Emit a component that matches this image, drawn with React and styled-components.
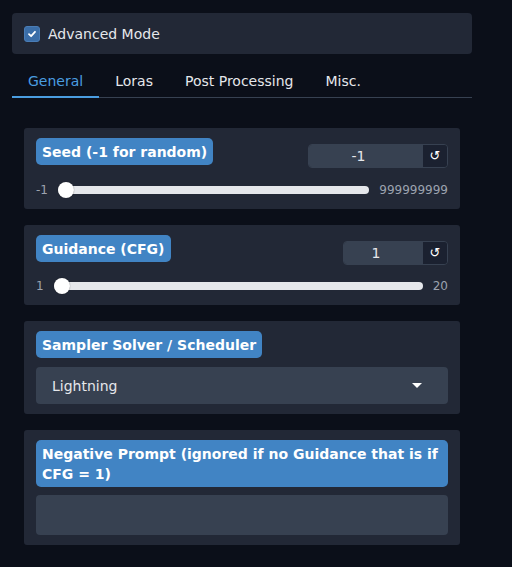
import React from "react";
import styled, { createGlobalStyle } from "styled-components";

const Global = createGlobalStyle`
  html, body { margin: 0; padding: 0; background: #0b0f19; }
  body { font-family: "DejaVu Sans", Verdana, sans-serif; color: #e5e7eb; }
  * { box-sizing: border-box; }
`;

const Page = styled.div`
  width: 512px;
  min-height: 567px;
  padding: 13px 40px 0 12px;
  background: #0b0f19;
`;

const TopBox = styled.div`
  height: 41px;
  background: #222836;
  border-radius: 4px;
  display: flex;
  align-items: center;
  gap: 8px;
  padding: 0 12px;
  font-size: 14px;
  color: #e5e7eb;
`;

const Check = styled.span`
  width: 16px;
  height: 16px;
  border-radius: 3px;
  background: #3b6ea8;
  border: 1px solid #4a7db6;
  display: inline-flex;
  align-items: center;
  justify-content: center;
`;

const TabList = styled.div`
  margin-top: 9px;
  display: flex;
  border-bottom: 1px solid #374151;
`;

const Tab = styled.div`
  padding: 8px 16px 5px;
  line-height: 20px;
  font-size: 14px;
  color: ${(p) => (p.$active ? "#4a9de0" : "#e5e7eb")};
  border-bottom: 2px solid ${(p) => (p.$active ? "#4a9de0" : "transparent")};
  margin-bottom: -1px;
`;

const Cards = styled.div`
  margin: 30px 12px 0;
  display: flex;
  flex-direction: column;
  gap: 16px;
`;

const Card = styled.div`
  background: #222836;
  border-radius: 3px;
  padding: 10px 12px;
  display: flex;
  flex-direction: column;
  gap: ${(p) => p.$gap || "9px"};
`;

const Header = styled.div`
  display: flex;
  justify-content: space-between;
  align-items: flex-start;
`;

const Label = styled.div`
  align-self: ${(p) => (p.$full ? "stretch" : "flex-start")};
  background: #4184c4;
  color: #ffffff;
  font-weight: bold;
  font-size: 14px;
  line-height: 20px;
  padding: 4px 6px 3px;
  border-radius: 5px;
`;

const NumberGroup = styled.div`
  margin-top: 6px;
  width: ${(p) => p.$w}px;
  height: 24px;
  display: flex;
  border: 1px solid #374151;
  border-radius: 4px;
  overflow: hidden;
`;

const NumberField = styled.div`
  flex: 1;
  background: #374151;
  color: #e5e7eb;
  font-size: 14px;
  line-height: 22px;
  text-align: center;
  padding-right: 14px;
`;

const ResetButton = styled.div`
  width: 25px;
  background: #1b2130;
  color: #ffffff;
  font-size: 13px;
  line-height: 22px;
  text-align: center;
  border-left: 1px solid #374151;
`;

const SliderRow = styled.div`
  height: 18px;
  display: flex;
  align-items: center;
  gap: 10px;
  font-size: 12px;
  color: #9ca3af;
`;

const Range = styled.input`
  flex: 1;
  margin: 0;
  height: 16px;
  -webkit-appearance: none;
  appearance: none;
  background: transparent;
  &::-webkit-slider-runnable-track {
    height: 8px;
    border-radius: 4px;
    background: #e5e7eb;
  }
  &::-webkit-slider-thumb {
    -webkit-appearance: none;
    width: 16px;
    height: 16px;
    margin-top: -4px;
    border-radius: 50%;
    background: #ffffff;
    box-shadow: 0 0 1px rgba(0, 0, 0, 0.6);
  }
  &::-moz-range-track {
    height: 8px;
    border-radius: 4px;
    background: #e5e7eb;
  }
  &::-moz-range-thumb {
    width: 16px;
    height: 16px;
    border: none;
    border-radius: 50%;
    background: #ffffff;
  }
`;

const Dropdown = styled.div`
  height: 37px;
  background: #374151;
  border-radius: 4px;
  display: flex;
  align-items: center;
  justify-content: space-between;
  padding: 0 26px 0 16px;
  font-size: 14px;
  color: #e5e7eb;
`;

const Caret = styled.span`
  width: 0;
  height: 0;
  border-left: 5px solid transparent;
  border-right: 5px solid transparent;
  border-top: 5px solid #ffffff;
`;

const TextArea = styled.div`
  height: 40px;
  background: #374151;
  border-radius: 4px;
`;

function SliderCard({ label, value, min, max, inputWidth, gap }) {
  return (
    <Card $gap={gap}>
      <Header>
        <Label>{label}</Label>
        <NumberGroup $w={inputWidth}>
          <NumberField>{value}</NumberField>
          <ResetButton>↺</ResetButton>
        </NumberGroup>
      </Header>
      <SliderRow>
        <span>{min}</span>
        <Range type="range" min={min} max={max} defaultValue={value} readOnly />
        <span>{max}</span>
      </SliderRow>
    </Card>
  );
}

export default function App() {
  return (
    <>
      <Global />
      <Page>
        <TopBox>
          <Check>
            <svg width="10" height="10" viewBox="0 0 10 10">
              <path d="M2 5.2 L4.1 7.2 L8 2.8" stroke="#fff" strokeWidth="1.8" fill="none" strokeLinecap="round" strokeLinejoin="round" />
            </svg>
          </Check>
          Advanced Mode
        </TopBox>
        <TabList>
          <Tab $active>General</Tab>
          <Tab>Loras</Tab>
          <Tab>Post Processing</Tab>
          <Tab>Misc.</Tab>
        </TabList>
        <Cards>
          <SliderCard label="Seed (-1 for random)" value={-1} min={-1} max={999999999} inputWidth={140} gap="13px" />
          <SliderCard label="Guidance (CFG)" value={1} min={1} max={20} inputWidth={105} gap="12px" />
          <Card>
            <Label>Sampler Solver / Scheduler</Label>
            <Dropdown>
              <span>Lightning</span>
              <Caret />
            </Dropdown>
          </Card>
          <Card $gap="8px">
            <Label $full>Negative Prompt (ignored if no Guidance that is if CFG = 1)</Label>
            <TextArea />
          </Card>
        </Cards>
      </Page>
    </>
  );
}
